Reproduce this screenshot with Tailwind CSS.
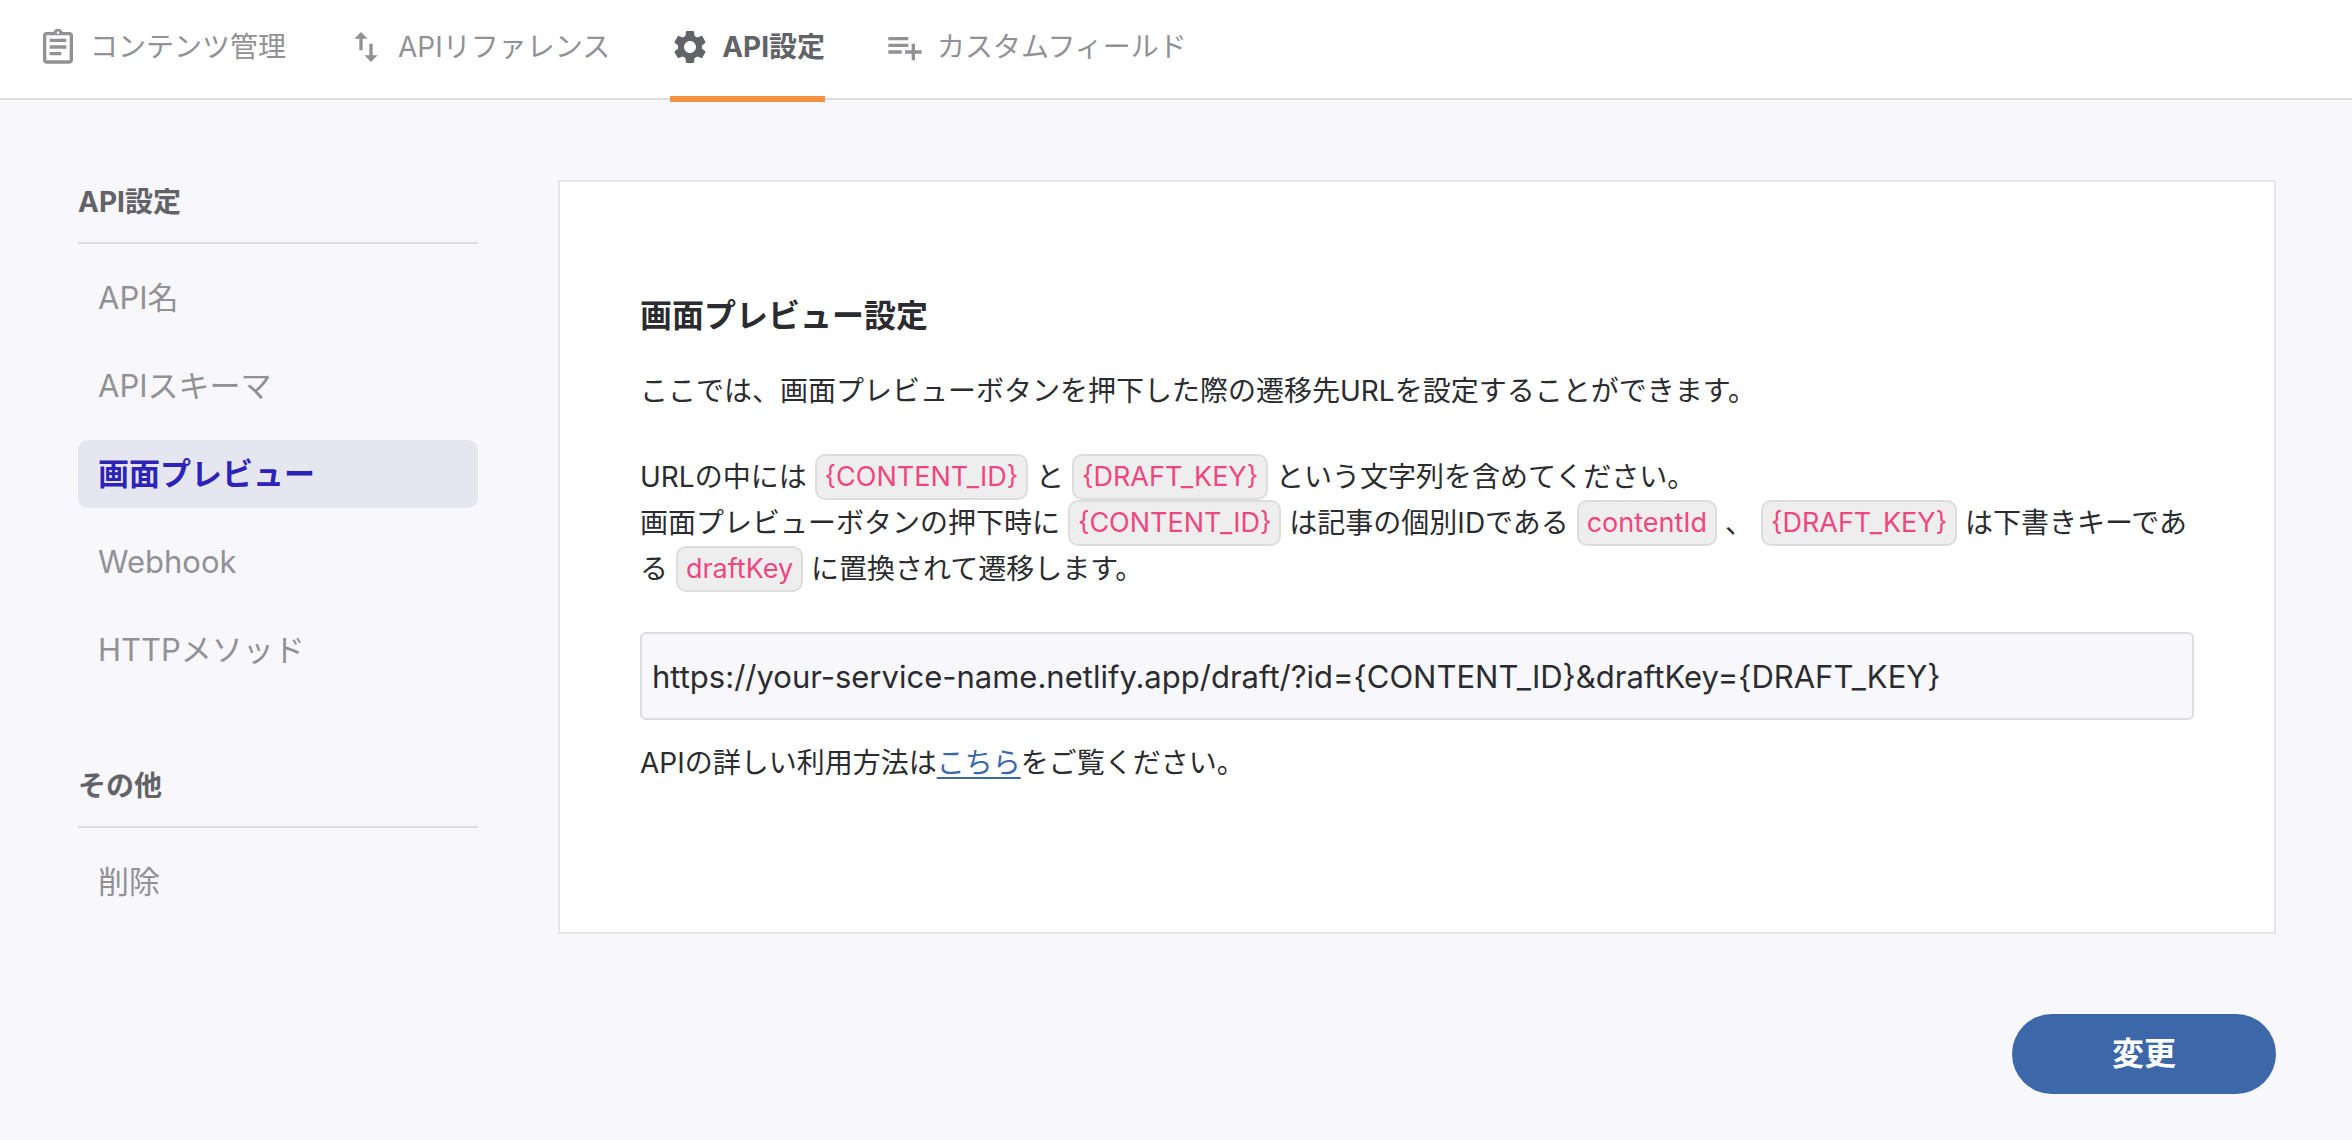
<!DOCTYPE html>
<html lang="ja">
<head>
  <meta charset="UTF-8">
  <meta name="viewport" content="width=device-width, initial-scale=1">
  <title>API設定</title>
  <script src="https://cdn.jsdelivr.net/npm/@tailwindcss/browser@4"></script>
</head>
<body class="min-h-screen bg-[#f8f7fc] font-['Inter','Noto_Sans_CJK_JP',sans-serif] text-[28px] leading-[46px] text-[#2b2c30]">

  <!-- tabs -->
  <header class="border-b-2 border-[#dddddd] bg-white px-[38px]">
    <nav class="-mb-[4px] flex gap-[60px] text-[#919196]">
      <a href="#" class="flex h-[102px] items-center gap-3 pb-2">
        <svg class="size-10" viewBox="0 0 24 24" fill="currentColor"><path d="M7 15h7v2H7zm0-4h10v2H7zm0-4h10v2H7zm12-4h-4.180C14.400 1.840 13.300 1 12 1s-2.400.84-2.820 2H5c-1.100 0-2 .9-2 2v15c0 1.100.9 2 2 2h14c1.100 0 2-.9 2-2V5c0-1.100-.9-2-2-2zm-7-.25c.41 0 .75.34.75.75s-.34.75-.75.75-.75-.34-.75-.75.34-.75.75-.75zM19 20H5V5h14v15z"/></svg>
        コンテンツ管理
      </a>
      <a href="#" class="flex h-[102px] items-center gap-3 pb-2">
        <svg class="size-10" viewBox="0 0 24 24" fill="currentColor"><path d="M16 17.010V10h-2v7.010h-3L15 21l4-3.990h-3zM9 3L5 6.990h3V14h2V6.990h3L9 3z"/></svg>
        APIリファレンス
      </a>
      <a href="#" class="flex h-[102px] items-center gap-3 border-b-6 border-[#f29344] pb-[2px] font-bold text-[#626368]">
        <svg class="size-10" viewBox="0 0 24 24" fill="currentColor"><path d="M19.140 12.940c.04-.3.060-.61.060-.94 0-.32-.02-.64-.07-.94l2.030-1.580c.18-.14.230-.41.120-.61l-1.920-3.320c-.12-.22-.37-.29-.59-.22l-2.390.96c-.5-.38-1.030-.7-1.620-.94l-.36-2.540c-.04-.24-.24-.41-.48-.41h-3.840c-.24 0-.43.17-.47.41l-.36 2.540c-.59.24-1.130.57-1.620.94l-2.390-.96c-.22-.08-.47 0-.59.22L2.740 8.870c-.12.210-.08.470.12.610l2.030 1.580c-.05.3-.09.63-.09.94s.02.64.070.94l-2.030 1.580c-.18.140-.23.410-.12.610l1.920 3.320c.12.220.37.290.59.220l2.390-.96c.5.380 1.030.7 1.620.94l.36 2.540c.05.240.24.410.48.410h3.840c.24 0 .44-.17.470-.41l.36-2.540c.59-.24 1.130-.56 1.620-.94l2.390.96c.22.080.47 0 .59-.22l1.920-3.320c.12-.22.070-.47-.12-.61l-2.010-1.580zM12 15.600c-1.980 0-3.600-1.620-3.600-3.600s1.620-3.600 3.600-3.600 3.600 1.620 3.600 3.600-1.620 3.600-3.600 3.600z"/></svg>
        API設定
      </a>
      <a href="#" class="flex h-[102px] items-center gap-3 pb-2">
        <svg class="size-10" viewBox="0 0 24 24" fill="currentColor"><path d="M14 10H2v2h12v-2zm0-4H2v2h12V6zm4 8v-4h-2v4h-4v2h4v4h2v-4h4v-2h-4zM2 16h8v-2H2v2z"/></svg>
        カスタムフィールド
      </a>
    </nav>
  </header>

  <div class="flex items-start gap-20 py-20 pr-[76px] pl-[78px]">
    <!-- side menu -->
    <aside class="w-[400px] shrink-0">
      <h2 class="border-b-2 border-[#dddddd] pb-[18px] leading-[44px] font-bold text-[#626368]">API設定</h2>
      <ul class="mt-5 space-y-5 text-[31px] leading-[68px] text-[#919196]">
        <li><a href="#" class="block rounded-[10px] px-5">API名</a></li>
        <li><a href="#" class="block rounded-[10px] px-5">APIスキーマ</a></li>
        <li><a href="#" class="block rounded-[10px] bg-[#e6e6f0] px-5 font-bold text-[#2d23b9]">画面プレビュー</a></li>
        <li><a href="#" class="block rounded-[10px] px-5">Webhook</a></li>
        <li><a href="#" class="block rounded-[10px] px-5">HTTPメソッド</a></li>
      </ul>
      <h2 class="mt-20 border-b-2 border-[#dddddd] pb-[18px] leading-[44px] font-bold text-[#626368]">その他</h2>
      <ul class="mt-5 text-[31px] leading-[68px] text-[#919196]">
        <li><a href="#" class="block rounded-[10px] px-5">削除</a></li>
      </ul>
    </aside>

    <!-- preview settings -->
    <main class="min-w-0 flex-1">
      <form>
        <div class="border-2 border-[#e6e6e6] bg-white px-20 pt-[108px] pb-[146px]">
          <h1 class="text-[32px] leading-[52px] font-bold">画面プレビュー設定</h1>
          <p class="mt-[26px]">ここでは、画面プレビューボタンを押下した際の遷移先URLを設定することができます。</p>
          <p class="mt-10">
            URLの中には <code class="inline-block rounded-[10px] border-2 border-[#dddddd] bg-[#eeeeee] px-2 align-top font-[inherit] text-[27px] leading-[42px] text-[#ee4780]">{CONTENT_ID}</code> と <code class="inline-block rounded-[10px] border-2 border-[#dddddd] bg-[#eeeeee] px-2 align-top font-[inherit] text-[27px] leading-[42px] text-[#ee4780]">{DRAFT_KEY}</code> という文字列を含めてください。<br>
            画面プレビューボタンの押下時に <code class="inline-block rounded-[10px] border-2 border-[#dddddd] bg-[#eeeeee] px-2 align-top font-[inherit] text-[27px] leading-[42px] text-[#ee4780]">{CONTENT_ID}</code> は記事の個別IDである <code class="inline-block rounded-[10px] border-2 border-[#dddddd] bg-[#eeeeee] px-2 align-top font-[inherit] text-[27px] leading-[42px] text-[#ee4780]">contentId</code> 、 <code class="inline-block rounded-[10px] border-2 border-[#dddddd] bg-[#eeeeee] px-2 align-top font-[inherit] text-[27px] leading-[42px] text-[#ee4780]">{DRAFT_KEY}</code> は下書きキーである <code class="inline-block rounded-[10px] border-2 border-[#dddddd] bg-[#eeeeee] px-2 align-top font-[inherit] text-[27px] leading-[42px] text-[#ee4780]">draftKey</code> に置換されて遷移します。
          </p>
          <input type="text" aria-label="遷移先URL" value="https://your-service-name.netlify.app/draft/?id={CONTENT_ID}&amp;draftKey={DRAFT_KEY}" class="mt-10 block h-[88px] w-full rounded-[6px] border-2 border-[#dddddd] bg-[#f8f7fc] px-[10px] text-[31px]">
          <p class="mt-5">APIの詳しい利用方法は<a href="#" class="text-[#3c68aa] underline decoration-2 underline-offset-4">こちら</a>をご覧ください。</p>
        </div>
        <div class="mt-20 flex justify-end">
          <button type="submit" class="h-20 w-[264px] rounded-full bg-[#3c68aa] text-[32px] font-bold text-white">変更</button>
        </div>
      </form>
    </main>
  </div>

</body>
</html>
